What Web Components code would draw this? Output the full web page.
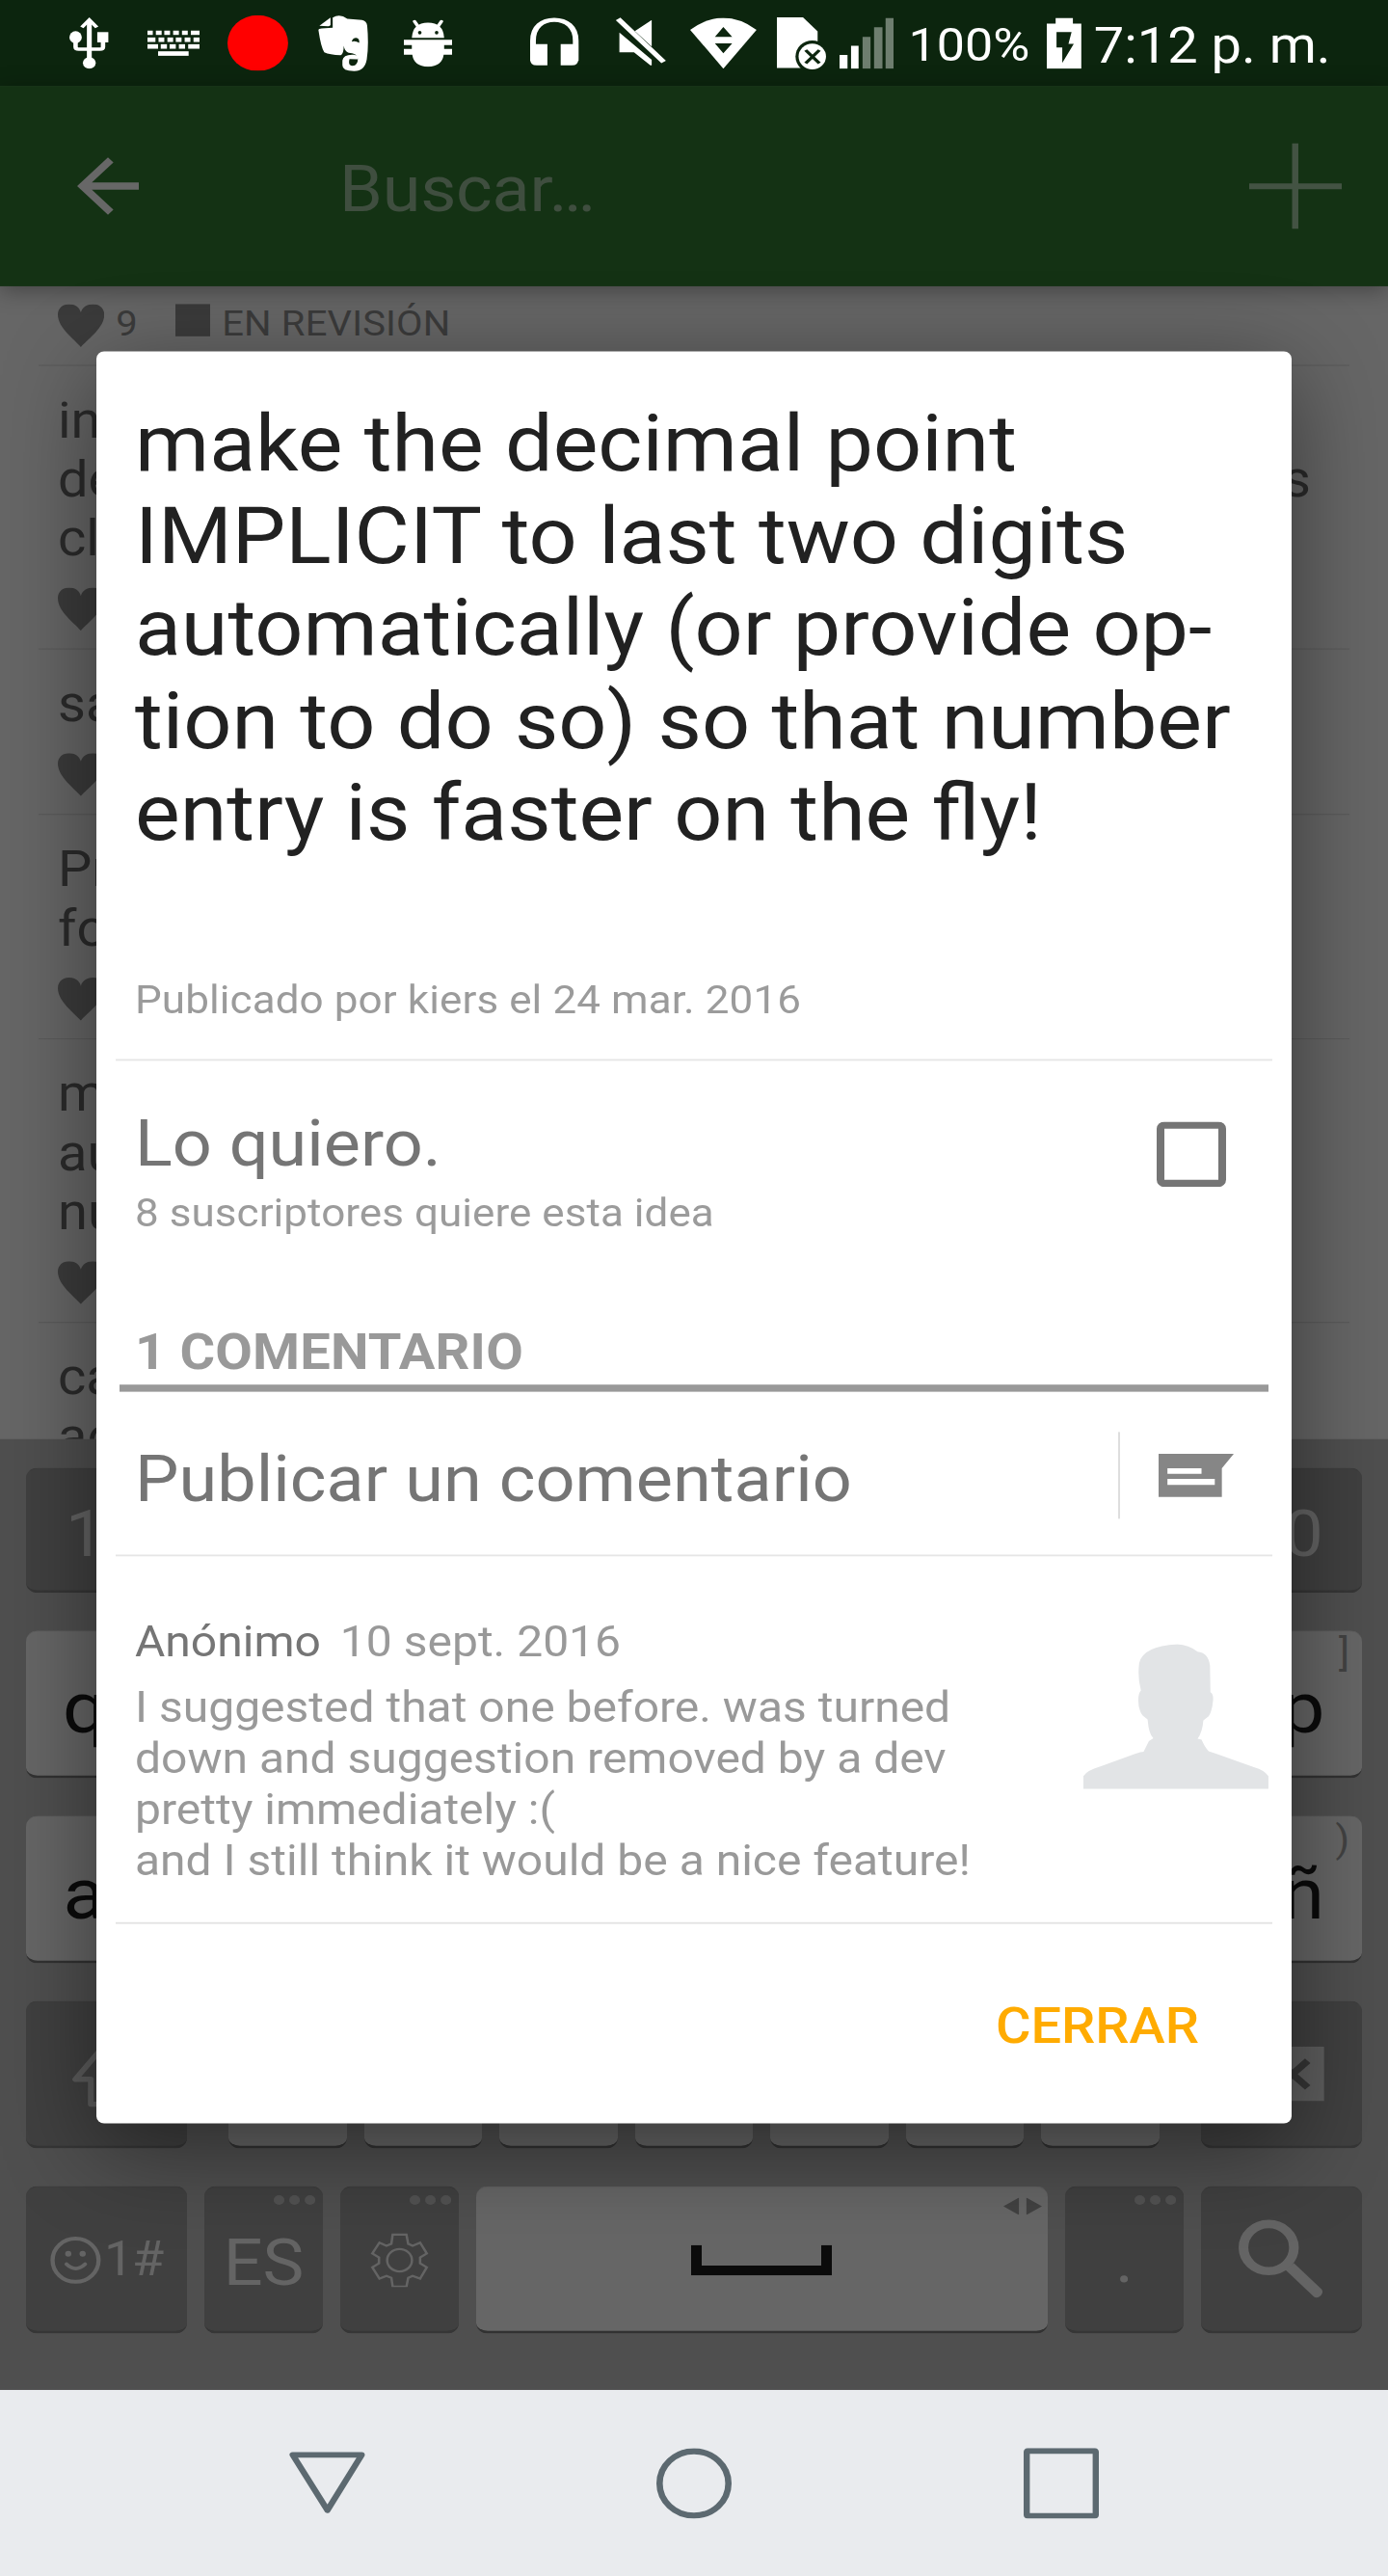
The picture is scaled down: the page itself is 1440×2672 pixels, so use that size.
<!DOCTYPE html>
<html lang="es">
<head>
<meta charset="utf-8">
<title>Ideas</title>
<style>
html,body{margin:0;padding:0;background:#4f4f4f}
body{font-family:Roboto,"Noto Sans",sans-serif}
</style>
</head>
<body>
<phone-screen>
  <status-bar level="100%" time="7:12 p. m."></status-bar>
  <search-bar placeholder="Buscar…"></search-bar>
  <idea-list>
    <idea-row first votes="9" status="EN REVISIÓN"></idea-row>
    <idea-row><text-line>in</text-line><text-line end="s">de</text-line><text-line>cl</text-line></idea-row>
    <idea-row><text-line>sa</text-line></idea-row>
    <idea-row><text-line>Pr</text-line><text-line>fo</text-line></idea-row>
    <idea-row><text-line>m</text-line><text-line>au</text-line><text-line>nu</text-line></idea-row>
    <idea-row><text-line>ca</text-line><text-line>ac</text-line></idea-row>
  </idea-list>
  <soft-keyboard></soft-keyboard>
  <nav-bar></nav-bar>
  <idea-dialog slot="overlay">
    <span slot="title">make the decimal point<br>IMPLICIT to last two digits<br>automatically (or provide op-<br>tion to do so) so that number<br>entry is faster on the fly!</span>
    <span slot="meta">Publicado por kiers el 24 mar. 2016</span>
    <vote-row slot="body" label="Lo quiero." note="8 suscriptores quiere esta idea"></vote-row>
    <section-head slot="body">1 COMENTARIO</section-head>
    <compose-row slot="body">Publicar un comentario</compose-row>
    <comment-item slot="body" author="Anónimo" date="10 sept. 2016">I suggested that one before. was turned<br>down and suggestion removed by a dev<br>pretty immediately :(<br>and I still think it would be a nice feature!</comment-item>
    <span slot="action">CERRAR</span>
  </idea-dialog>
</phone-screen>

<script>
const define = (name, render) => customElements.define(name, class extends HTMLElement {
  connectedCallback() {
    if (this.shadowRoot) return;
    const t = document.createElement('template');
    t.innerHTML = render(this);
    this.attachShadow({mode: 'open'}).append(t.content.cloneNode(true));
  }
});
const attr = (el, n) => el.getAttribute(n) || '';

/* Each icon: viewBox, horizontal and vertical px per unit, drawing. */
const KX = .45918, S = .35928, M = .38494, K = .44817, L = .42069;
const BG = '#0c250e';
const rects = (y, h, list) => list.map(([a, b]) => `<rect x="${a}" y="${y}" width="${b - a}" height="${h}"/>`).join('');
const ICONS = {
  usb: ['157 52 90 163', KX, S, `<g fill="none" stroke="currentColor"><path stroke-width="11" d="M202 62V200"/><path stroke-width="10" d="M171 125v20q0 7 7 7h48q7 0 7-7v-20"/><path stroke-width="9" d="M185 84L202 61 219 84"/></g><ellipse cx="171" cy="115" rx="14" ry="19"/><rect x="220" y="99" width="25" height="32"/><ellipse cx="202" cy="195" rx="14.500" ry="18"/>`],
  keys: ['333 95 118 80', KX, S,
    rects(95, 14, [[333,345],[352,365],[371,384],[391,404],[411,424],[431,451]]) +
    rects(117, 14, [[333,351],[358,371],[378,391],[397,410],[417,430],[437,451]]) +
    rects(138, 14, [[333,357],[363,377],[383,397],[404,418],[425,451]]) + rects(160, 14, [[357,426]])],
  rec: ['515 46 137 174', KX, S, `<ellipse cx="583.500" cy="133" rx="68.500" ry="87" fill="#f00"/>`],
  elephant: ['719 44 114 179', KX, S, `<path d="M752 86V54Q768 40 785 58L818 62Q829 65 830 80Q834 140 829 185Q824 222 800 221Q774 221 774 203V188Q776 168 800 170Q812 174 808 184L790 183Q786 204 797 204Q809 203 809 180Q806 165 788 164Q779 160 777 142Q777 168 770 171Q745 170 733 162Q726 150 720 95Q719 88 727 88Z"/><path d="M722 80L747 54V76Q747 81 742 81Z"/><path fill="${BG}" d="M795 129Q797 117 805 117Q813 118 812 133Q804 126 795 129Z"/>`],
  bug: ['912 58 109 151', KX, S, `<path d="M930 117Q932 70 966.500 70Q1001 70 1003 117Z"/><path fill="none" stroke="currentColor" stroke-width="8" stroke-linecap="round" d="M936 66l9 18M997 66l-9 18"/><ellipse cx="948" cy="101" rx="4" ry="5.500" fill="${BG}"/><ellipse cx="986" cy="101" rx="4" ry="5.500" fill="${BG}"/><path d="M912 123h109v17h-18v12h18v18h-19Q998 207 966.500 207Q935 207 931 170h-19v-18h18v-12h-18z"/>`],
  phones: ['1198 54 110 152', KX, S, `<path fill="none" stroke="currentColor" stroke-width="13" d="M1204.500 190V128C1204.500 84 1226 63 1252.500 63S1301 84 1301 128V190"/><path d="M1198 138h39v66h-24q-15 0-15-18zM1267 138h40v48q0 18-15 18h-25z"/>`],
  mute: ['1390 54 117 152', KX, S, `<path d="M1400 102L1473 187V204H1470L1433 164H1400ZM1473 63V146L1435 98Z"/><path fill="none" stroke="currentColor" stroke-width="13" d="M1397 60L1500 194"/>`],
  wifi: ['-8 55 150 158', KX, S, `<path d="M67 213L-8 92Q67 18 142 92Z"/><path fill="${BG}" d="M48 114L67 83 87 114ZM48 134H87L67 165Z"/>`],
  sim: ['187 54 112 165', KX, S, `<path d="M187 55H246L279 99V213H187Z"/><ellipse cx="267" cy="177" rx="38" ry="50" fill="${BG}"/><ellipse cx="267" cy="177" rx="31" ry="40"/><path stroke="${BG}" stroke-width="8" d="M252 157L283 198M283 157L252 198"/>`],
  signal: ['329 55 123 158', KX, S, `<path d="M329 170h18v43h-18zM355 142h17v71h-17z"/><path fill="#6e7e6f" d="M381 114h18v99h-18zM407 84h19v129h-19zM433 55h18v158h-18z"/>`],
  battery: ['797 55 78 158', KX, S, `<path d="M797 73H817V55H856V73H875V213H797Z"/><path fill="${BG}" d="M819 99H853L846 136H858L832 195V147H819Z"/>`],
  back: ['0 0 24 24', 4, 4, `<path d="M20 11H7.830l5.590-5.590L12 4l-8 8 8 8 1.410-1.410L7.830 13H20v-2z"/>`],
  plus: ['0 0 96 96', 1, 1, `<path d="M44.500 0h6.500v45H96v6.500H51V96h-6.500V51.500H0V45h44.500z"/>`],
  heart: ['131 945 105 135', KX, .356, `<path d="M183 1080C168 1055 131 1020 131 978C131 957 143 945 156 945C170 945 180 955 183 971C186 955 197 945 211 945C224 945 236 957 236 978C236 1020 198 1055 183 1080Z"/>`],
  check: ['0 0 72 73', 1, 1, `<rect x="4" y="4" width="64" height="65" rx="4" fill="none" stroke="currentColor" stroke-width="8"/>`],
  comment: ['1050 1198 170 126', KX, M, `<path fill-rule="evenodd" d="M1050 1199H1220L1193 1241V1324H1050ZM1070 1241V1257H1147V1241ZM1070 1272V1289H1177V1272Z"/>`],
  avatar: ['880 195 418 453', KX, S, `<path d="M1092 196Q1118 198 1138 219Q1162 222 1166 262L1167 345Q1174 350 1173 370Q1171 404 1163 420L1151 433Q1149 470 1138 490L1147 493Q1154 516 1163 529L1181 537L1265 578Q1290 588 1298 606V648H880V606Q889 588 917 577L998 536Q1010 530 1016 530L1028 497L1038 488Q1028 478 1025 430L1014 418Q1004 400 1004 370Q1004 348 1010 340Q1002 300 1006 255Q1014 202 1092 196Z"/>`],
  shift: ['160 228 160 176', KX, K, `<path fill="none" stroke="currentColor" stroke-width="13" stroke-linejoin="round" d="M240 238L169 330H204V392H276V330H311Z"/>`],
  backspace: ['1220 161 204 147', KX, L, `<path d="M1278 161H1424V308H1278L1220 235Z"/><path stroke="#363636" stroke-width="17" d="M1318 199L1387 270M1387 199L1318 270"/>`],
  smile: ['112 720 115 120', KX, K, `<ellipse cx="169.500" cy="780" rx="52" ry="54" fill="none" stroke="currentColor" stroke-width="9.500"/><ellipse cx="153" cy="764" rx="7" ry="7"/><ellipse cx="185.500" cy="764" rx="7" ry="7"/><path fill="none" stroke="currentColor" stroke-width="9" stroke-linecap="round" d="M149 790Q170 812 191 790"/>`],
  dots: ['617 618 94 25', KX, K, `<ellipse cx="629" cy="630.500" rx="12" ry="12"/><ellipse cx="664" cy="630.500" rx="12" ry="12"/><ellipse cx="699" cy="630.500" rx="12" ry="12"/>`],
  gear: ['836 712 134 138', KX, K, `<g fill="none" stroke="currentColor" stroke-width="5.500"><path d="M887 717H918L922 740 932 745 949 737 964 764 949 774V789L964 799 949 827 932 820 922 825 918 847H887L884 825 873 820 857 827 841 799 856 789V774L841 764 857 737 873 745 884 740Z"/><ellipse cx="902.500" cy="781" rx="28" ry="28"/></g>`],
  arrows: ['697 562 87 46', KX, L, `<path d="M697 585L732 562V608ZM784 585L749 562V608Z"/>`],
  space: ['0 0 146 34', 1, 1, `<path d="M0 0h11v23h124V0h11v34H0z"/>`],
  find: ['1232 620 192 212', KX, L, `<ellipse cx="1300" cy="695.500" rx="57" ry="62.500" fill="none" stroke="currentColor" stroke-width="22"/><path d="M1338 755L1357 737 1420 807Q1424 814 1418 823Q1409 833 1402 826Z"/>`],
  navback: ['652 1259 172 154', KX, K, `<path fill="none" stroke="currentColor" stroke-width="14" stroke-linejoin="round" d="M660 1267H816L738.500 1405Z"/>`],
  navhome: ['0 0 78 79', 1, 1, `<ellipse cx="39" cy="39.500" rx="35.700" ry="36" fill="none" stroke="currentColor" stroke-width="6.600"/>`],
  navapps: ['0 0 78 79', 1, 1, `<rect x="3.200" y="3.200" width="71.600" height="72.600" rx="1" fill="none" stroke="currentColor" stroke-width="6.400"/>`]
};
define('ui-icon', el => {
  const [vb, kx, ky, body] = ICONS[attr(el, 'name')];
  const [, , w, h] = vb.split(' ').map(Number);
  return `<style>:host{display:block;flex:none;width:${w * kx}px;height:${h * ky}px}svg{display:block;width:100%;height:100%}</style>
  <svg viewBox="${vb}" preserveAspectRatio="none" fill="currentColor">${body}</svg>`;
});

/* The 1440x2880 panel is squeezed vertically into the 2672px viewport. */
define('phone-screen', () => `<style>
:host{display:block;width:1440px;height:2672px;overflow:hidden}
.panel{position:relative;width:1440px;height:2880px;display:flex;flex-direction:column;transform:scaleY(.9277778);transform-origin:0 0;background:#666}
.over{position:absolute;left:100px;top:393px;width:1240px;height:1981px}
</style><div class="panel"><slot></slot><div class="over"><slot name="overlay"></slot></div></div>`);

define('status-bar', el => {
  const ic = (n, ml, mt) => `<ui-icon name="${n}" style="margin:${mt}px 0 0 ${ml}px"></ui-icon>`;
  return `<style>
:host{display:flex;flex:none;height:96px;background:${BG};color:#fff;align-items:flex-start;white-space:nowrap}
.lvl{font-size:52px;line-height:60px;margin:20.500px 0 0 15px;width:143.400px}
.time{font-size:56px;line-height:66px;margin:18px 0 0 13px}
</style>${ic('usb', 72, 18.7)}${ic('keys', 39.5, 34)}${ic('rec', 29.4, 16.5)}${ic('elephant', 30.8, 15.8)}${ic('bug', 36.3, 20.8)}${ic('phones', 81.3, 19.4)}${ic('mute', 37.7, 19.4)}${ic('wifi', 24.3, 19.8)}${ic('sim', 20.7, 19.4)}${ic('signal', 13.8, 19.8)}<span class="lvl">${attr(el, 'level')}</span>${ic('battery', 0, 19.8)}<span class="time">${attr(el, 'time')}</span>`;
});

define('search-bar', el => `<style>
:host{display:flex;flex:none;box-sizing:border-box;height:224px;align-items:center;padding:0 48px 0 64px;background:#143214;box-shadow:0 4px 22px rgba(0,0,0,.34);position:relative}
ui-icon:first-of-type{color:#676767}
ui-icon:last-of-type{color:#435343;margin-left:auto}
span{font-size:72px;line-height:84px;color:#3f4e3f;margin:8px 0 0 192px;letter-spacing:-.2px}
</style><ui-icon name="back"></ui-icon><span>${attr(el, 'placeholder')}</span><ui-icon name="plus"></ui-icon>`);

define('idea-list', () => `<style>:host{display:block;height:1289px;flex:none;overflow:hidden;background:#666;padding:0 40px}</style><slot></slot>`);
define('text-line', el => `<style>:host{display:flex;justify-content:space-between;font-size:56px;line-height:66px;color:#2b2b2b}</style><span><slot></slot></span><span>${attr(el, 'end')}</span>`);
define('idea-row', el => `<style>
:host{display:block;padding:${el.hasAttribute('first') ? 20 : 28}px 40px 20px 20px;border-bottom:1px solid #595959}
.meta{display:flex;height:48px;margin-top:${el.hasAttribute('first') ? 0 : 22}px;color:#3b3b3b;font-size:40px;line-height:43px}
.n{margin-left:12px;width:62px}
i{display:block;width:36px;height:36px;background:#3b3b3b;margin-right:12px}
i+span{letter-spacing:.15px}
</style><slot></slot><div class="meta"><ui-icon name="heart"></ui-icon>${el.hasAttribute('votes') ? `<span class="n">${attr(el, 'votes')}</span><i></i><span>${attr(el, 'status')}</span>` : ''}</div>`);

define('key-cap', el => `<style>
:host{display:flex;flex:1 1 0;box-sizing:border-box;position:relative;align-items:center;justify-content:center;border-radius:12px;background:#666;color:#0b0b0b;border-top:1px solid #5f5f5f;border-bottom:3px solid #323232;font-size:80px;line-height:94px;white-space:nowrap}
:host([dark]){background:#404040;color:#646464;border-top-color:#3c3c3c;border-bottom-color:#363636;font-size:72px;line-height:84px}
.hint{position:absolute;right:13px;top:0;font-size:42px;line-height:50px;color:#424242}
.corner{position:absolute;right:8px;top:9px;color:#525252}
</style><slot></slot><span class="hint">${attr(el, 'hint')}</span>${el.hasAttribute('corner') ? `<ui-icon class="corner" name="${attr(el, 'corner')}" style="${attr(el, 'corner') === 'arrows' ? 'right:6px;top:12px;color:#424242' : ''}"></ui-icon>` : ''}`);

define('soft-keyboard', () => {
  const blank = (n, a = '') => `<key-cap ${a}></key-cap>`.repeat(n);
  return `<style>
:host{display:flex;flex:none;flex-direction:column;gap:42px;box-sizing:border-box;height:1063px;padding:32px 27px 0;background:#4f4f4f}
.row{display:flex;gap:18px;height:165px;flex:none}
.top{height:140px}
.mod{flex:none;width:167px}
.sm{flex:none;width:123px}
.letters{display:flex;flex:1;gap:18px;margin:0 25px}
.mini{font-size:54px;line-height:66px}
</style>
<div class="row top"><key-cap dark><span style="margin-top:11px">1</span></key-cap>${blank(8, 'dark')}<key-cap dark><span style="margin:11px 0 0 1px">0</span></key-cap></div>
<div class="row"><key-cap><span style="margin:10px 1px 0 0">q</span></key-cap>${blank(8)}<key-cap hint="]"><span style="margin-top:10px">p</span></key-cap></div>
<div class="row"><key-cap><span style="margin:12px 2px 0 0">a</span></key-cap>${blank(8)}<key-cap hint=")"><span style="margin-top:12px">ñ</span></key-cap></div>
<div class="row"><key-cap dark class="mod"><ui-icon name="shift" style="color:#5c5c5c"></ui-icon></key-cap><div class="letters">${blank(7)}</div><key-cap dark class="mod"><ui-icon name="backspace" style="color:#5e5e5e;margin-left:-5px"></ui-icon></key-cap></div>
<div class="row"><key-cap dark class="mod mini"><ui-icon name="smile" style="margin-top:3px"></ui-icon><span style="letter-spacing:-1.500px;margin:1px 0 0 3px">1#</span></key-cap><key-cap dark class="sm" corner="dots"><span style="margin-top:8px">ES</span></key-cap><key-cap dark class="sm" corner="dots"><ui-icon name="gear" style="margin-top:2px"></ui-icon></key-cap><key-cap corner="arrows"><ui-icon name="space" style="margin:2px 1px 0 0"></ui-icon></key-cap><key-cap dark class="sm" corner="dots"><span style="margin-top:3px">.</span></key-cap><key-cap dark class="mod"><ui-icon name="find"></ui-icon></key-cap></div>`;
});

define('nav-bar', () => `<style>
:host{display:flex;flex:none;height:208px;align-items:center;justify-content:space-between;padding:0 300px;background:#e9ebee;color:#5c6970}
</style><ui-icon name="navback" style="margin-top:-1px"></ui-icon><ui-icon name="navhome"></ui-icon><ui-icon name="navapps"></ui-icon>`);

define('idea-dialog', () => `<style>
:host{display:flex;flex-direction:column;box-sizing:border-box;height:100%;padding:51px 20px 0;background:#fff;border-radius:8px;box-shadow:0 26px 100px rgba(0,0,0,.46)}
h1{margin:0 20px;font-weight:400;font-size:88px;line-height:103.200px;color:#212121;white-space:nowrap;word-spacing:.5px}
.meta{margin:132px 20px 40px;font-size:44px;line-height:52px;color:#9b9b9b;letter-spacing:.09px}
hr{width:100%;height:2px;border:0;margin:0;background:#e6e6e6;flex:none}
.act{align-self:flex-end;margin:81px 76px 0 0;font-weight:500;font-size:56px;line-height:66px;color:#ffab00}
</style><h1><slot name="title"></slot></h1><div class="meta"><slot name="meta"></slot></div><hr><slot name="body"></slot><div class="act"><slot name="action"></slot></div>`);

define('vote-row', el => `<style>
:host{display:flex;justify-content:space-between;align-items:flex-start;padding:51px 48px 0 20px;height:242px;box-sizing:border-box}
b{display:block;font-weight:400;font-size:72px;line-height:84px;color:#757575;margin-bottom:9px}
small{display:block;font-size:44px;line-height:52px;color:#9b9b9b;letter-spacing:.05px}
ui-icon{color:#757575;margin-top:17px}
</style><div><b>${attr(el, 'label')}</b><small>${attr(el, 'note')}</small></div><ui-icon name="check"></ui-icon>`);

define('section-head', () => `<style>
:host{display:block;margin:50px 4px 0;padding:0 16px 4px;border-bottom:8px solid #999;font-weight:700;font-size:56px;line-height:66px;color:#999;letter-spacing:.18px}
</style><slot></slot>`);

define('compose-row', () => `<style>
:host{display:flex;align-items:center;box-sizing:border-box;height:184px;padding:0 40px 0 20px;border-bottom:2px solid #e6e6e6;font-size:72px;line-height:84px;color:#757575}
span{flex:1;margin-top:14px;letter-spacing:.06px}
i{width:2px;height:97px;background:#dedede;margin:5px 40px 0 0}
ui-icon{color:#868686;margin-top:5px}
</style><span><slot></slot></span><i></i><ui-icon name="comment"></ui-icon>`);

define('comment-item', el => `<style>
:host{display:flex;justify-content:space-between;box-sizing:border-box;height:411px;padding:67px 4px 0 20px;border-bottom:2px solid #e3e3e3;font-size:48px;line-height:57px;color:#999;white-space:nowrap}
.head{display:flex;gap:20px;margin-bottom:16px}
b{font-weight:400;color:#757575}
ui-icon{color:#e2e4e6;margin-top:30.500px}
</style><div><div class="head"><b>${attr(el, 'author')}</b><span>${attr(el, 'date')}</span></div><slot></slot></div><ui-icon name="avatar"></ui-icon>`);
</script>
</body>
</html>
